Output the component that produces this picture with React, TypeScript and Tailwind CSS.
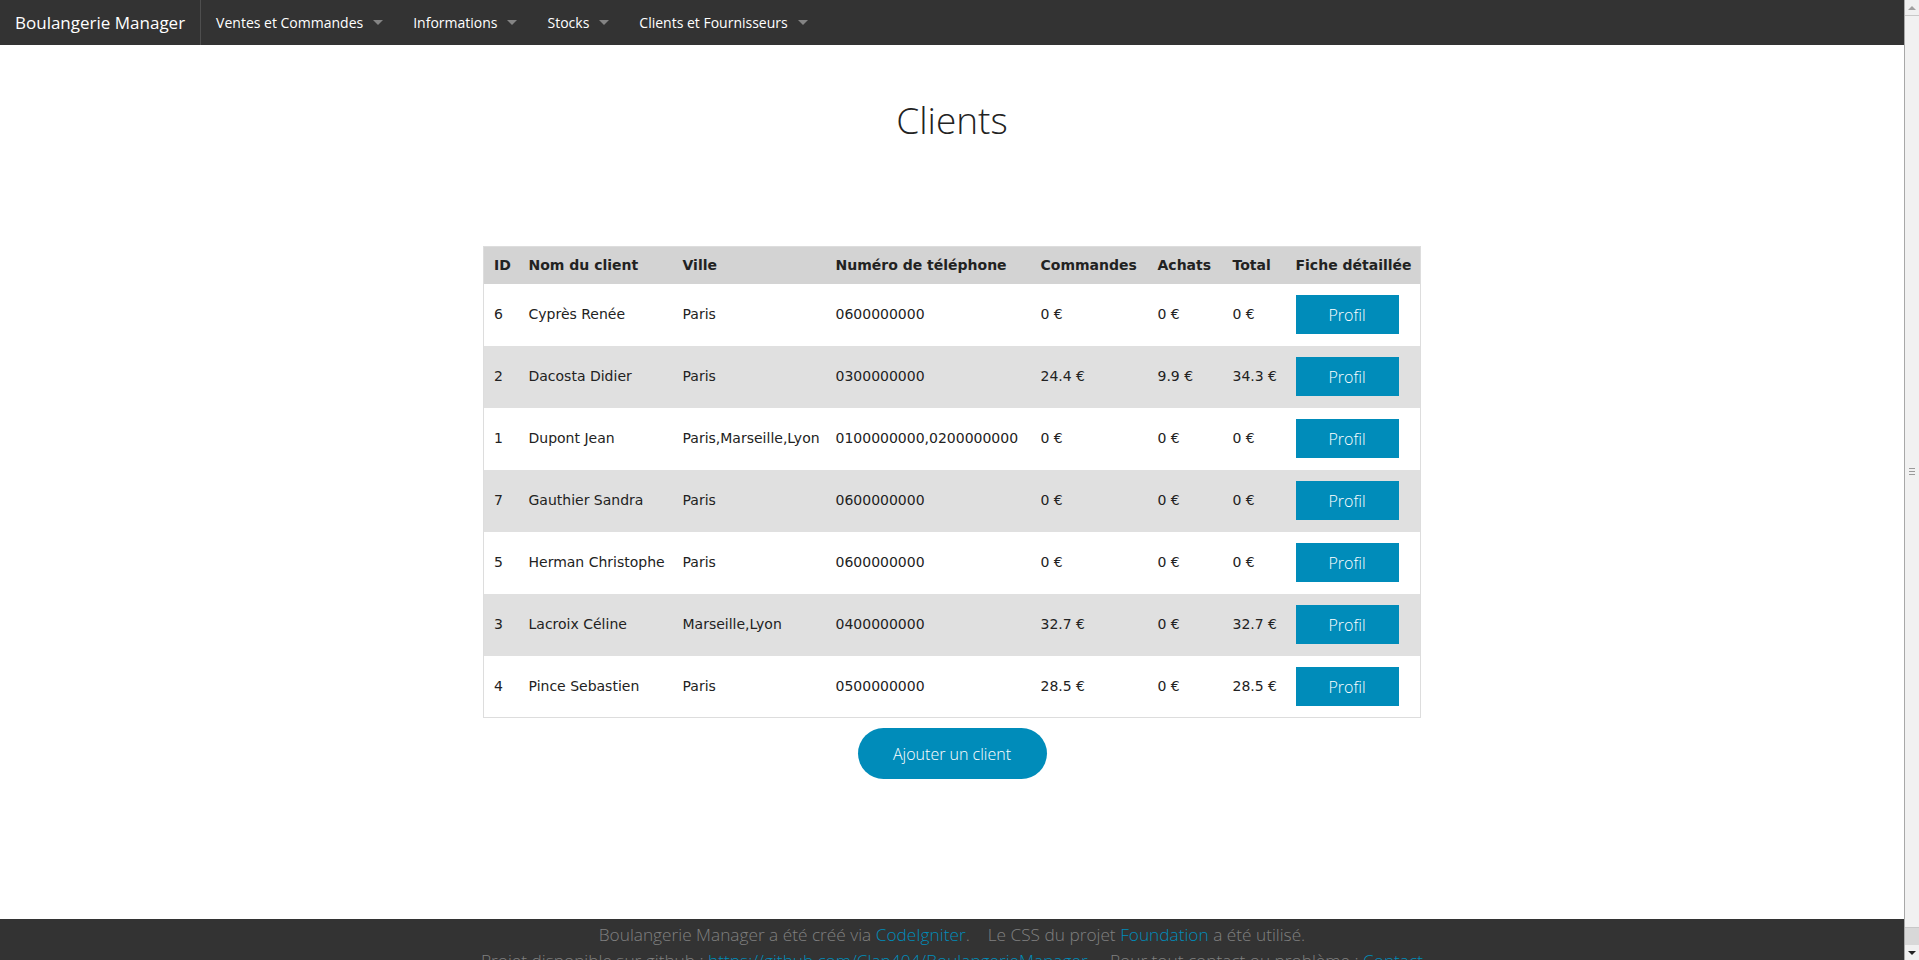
const clients = [
  { id: 6, nom: 'Cyprès Renée', ville: 'Paris', tel: '0600000000', commandes: '0 €', achats: '0 €', total: '0 €' },
  { id: 2, nom: 'Dacosta Didier', ville: 'Paris', tel: '0300000000', commandes: '24.4 €', achats: '9.9 €', total: '34.3 €' },
  { id: 1, nom: 'Dupont Jean', ville: 'Paris,Marseille,Lyon', tel: '0100000000,0200000000', commandes: '0 €', achats: '0 €', total: '0 €' },
  { id: 7, nom: 'Gauthier Sandra', ville: 'Paris', tel: '0600000000', commandes: '0 €', achats: '0 €', total: '0 €' },
  { id: 5, nom: 'Herman Christophe', ville: 'Paris', tel: '0600000000', commandes: '0 €', achats: '0 €', total: '0 €' },
  { id: 3, nom: 'Lacroix Céline', ville: 'Marseille,Lyon', tel: '0400000000', commandes: '32.7 €', achats: '0 €', total: '32.7 €' },
  { id: 4, nom: 'Pince Sebastien', ville: 'Paris', tel: '0500000000', commandes: '28.5 €', achats: '0 €', total: '28.5 €' },
];

const menus = ['Ventes et Commandes', 'Informations', 'Stocks', 'Clients et Fournisseurs'];

function TopBar() {
  return (
    <nav className="flex h-[45px] bg-[#333333] font-['Open_Sans',sans-serif] text-white">
      <div className="border-r border-[#4e4e4e] px-[15px] text-[17px] leading-[45px]">Boulangerie Manager</div>
      <ul className="flex">
        {menus.map((m) => (
          <li key={m} className="relative pl-[15px] pr-[35px] text-[14px] leading-[45px]">
            {m}
            <span className="absolute right-[15px] top-[20px] h-0 w-0 border-x-[5px] border-t-[5px] border-x-transparent border-t-white/40" />
          </li>
        ))}
      </ul>
    </nav>
  );
}

// fake classic scrollbar drawn at the right edge, like in the screenshot
function ScrollStrip() {
  return (
    <aside className="sticky top-0 flex h-screen w-[15px] shrink-0 flex-col self-start border-l border-[#a8a8a8] bg-[#e6e6e6]">
      <div className="flex h-[15px] items-center justify-center bg-[#f0f0f0]">
        <span className="h-0 w-0 border-x-[4px] border-b-[4px] border-x-transparent border-b-[#a0a0a0]" />
      </div>
      <div className="flex flex-1 items-center justify-center border-y border-[#c8c8c8] bg-[#f1f1f1]">
        <div className="flex flex-col gap-[2px]">
          <span className="h-px w-[6px] bg-[#9a9a9a]" />
          <span className="h-px w-[6px] bg-[#9a9a9a]" />
          <span className="h-px w-[6px] bg-[#9a9a9a]" />
        </div>
      </div>
      <div className="h-[17px] bg-[#d8d8d8]" />
      <div className="flex h-[15px] items-center justify-center bg-[#f0f0f0]">
        <span className="h-0 w-0 border-x-[4px] border-t-[4px] border-x-transparent border-t-[#222]" />
      </div>
    </aside>
  );
}

export default function App() {
  return (
    <div className="flex bg-white">
      <div className="min-w-0 flex-1 font-['DejaVu_Sans',sans-serif] text-[#222222]">
        <TopBar />
        <main className="flex flex-col items-center">
          <h2 className="mt-[53px] font-['Open_Sans',sans-serif] text-[37px] font-light leading-[1.2]">Clients</h2>

          <table className="mt-[104px] w-[937px] table-fixed border border-[#dddddd] text-[14px]">
            <thead className="bg-[#d3d3d3]">
              <tr>
                <th className="h-[37px] w-[35px] px-[10px] text-left font-bold">ID</th>
                <th className="w-[154px] px-[10px] text-left font-bold">Nom du client</th>
                <th className="w-[153px] px-[10px] text-left font-bold">Ville</th>
                <th className="w-[205px] px-[10px] text-left font-bold">Numéro de téléphone</th>
                <th className="w-[117px] px-[10px] text-left font-bold">Commandes</th>
                <th className="w-[75px] px-[10px] text-left font-bold">Achats</th>
                <th className="w-[63px] px-[10px] text-left font-bold">Total</th>
                <th className="w-[135px] whitespace-nowrap px-[10px] text-left font-bold">Fiche détaillée</th>
              </tr>
            </thead>
            <tbody>
              {clients.map((c, i) => (
                <tr key={c.id} className={i % 2 === 1 ? 'bg-[#e0e0e0]' : 'bg-white'}>
                  <td className="h-[62px] px-[10px]">{c.id}</td>
                  <td className="whitespace-nowrap px-[10px]">{c.nom}</td>
                  <td className="whitespace-nowrap px-[10px]">{c.ville}</td>
                  <td className="whitespace-nowrap px-[10px]">{c.tel}</td>
                  <td className="whitespace-nowrap px-[10px]">{c.commandes}</td>
                  <td className="whitespace-nowrap px-[10px]">{c.achats}</td>
                  <td className="whitespace-nowrap px-[10px]">{c.total}</td>
                  <td className="px-[10px]">
                    <button className="flex h-[39px] w-[103px] items-center justify-center bg-[#008cba] font-['Open_Sans',sans-serif] text-[16px] font-light text-white">
                      Profil
                    </button>
                  </td>
                </tr>
              ))}
            </tbody>
          </table>

          <button className="mb-[140px] mt-[10px] flex h-[51px] w-[189px] items-center justify-center rounded-full bg-[#008cba] font-['Open_Sans',sans-serif] text-[16px] font-light text-white">
            Ajouter un client
          </button>
        </main>

        <footer className="bg-[#333333] pb-[12px] pt-[3px] text-center font-['Open_Sans',sans-serif] text-[17.25px] font-light leading-[25.5px] text-[#808080]">
          <p>
            Boulangerie Manager a été créé via <a className="text-[#008cba]">CodeIgniter</a>.&nbsp;&nbsp;&nbsp; Le CSS du projet{' '}
            <a className="text-[#008cba]">Foundation</a> a été utilisé.
          </p>
          <p>
            Projet disponible sur github : <a className="text-[#008cba]">https://github.com/Clap404/BoulangerieManager</a>
            &nbsp;&nbsp;&nbsp;&nbsp; Pour tout contact ou problème : <a className="text-[#008cba]">Contact</a>
          </p>
        </footer>
      </div>
      <ScrollStrip />
    </div>
  );
}
